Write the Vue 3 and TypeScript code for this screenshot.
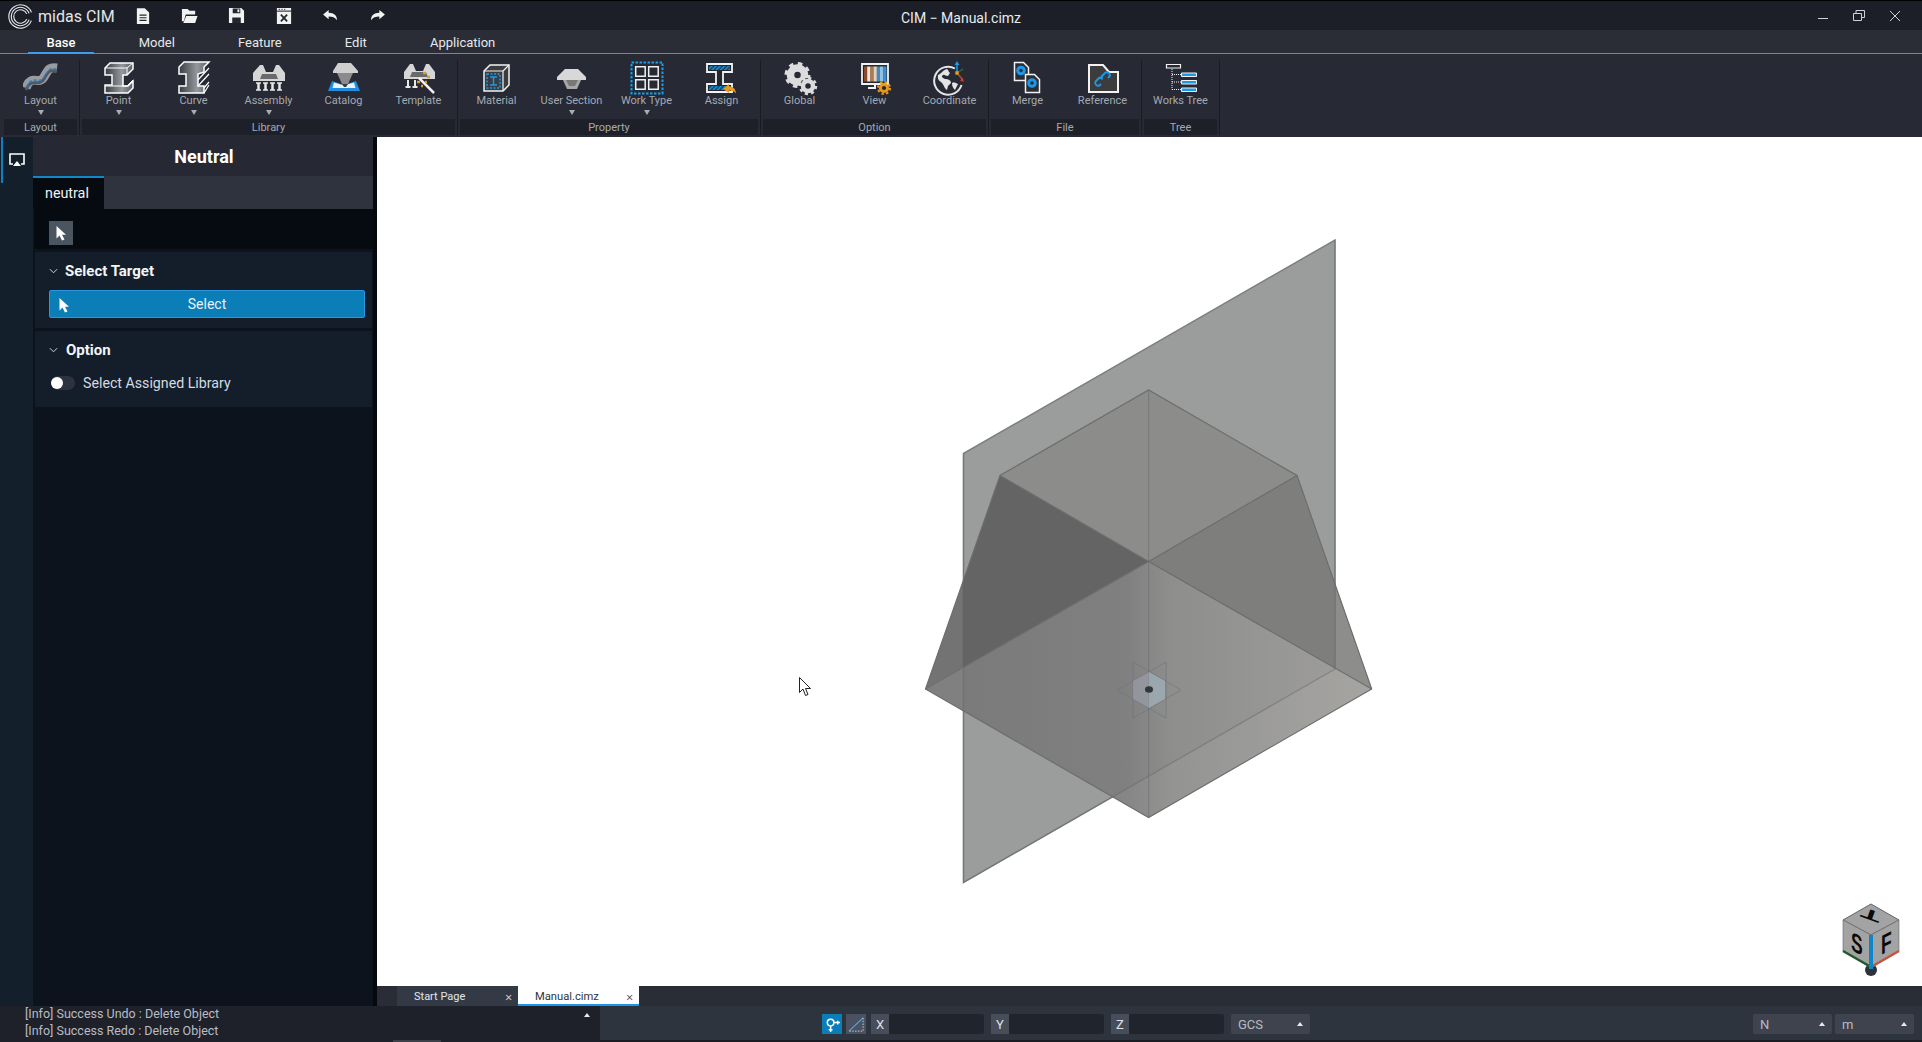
<script setup lang="ts">
interface RibbonItem { id: string; label: string; menu?: boolean }
interface RibbonGroup { label: string; items: RibbonItem[] }

const menuTabs: string[] = ['Base', 'Model', 'Feature', 'Edit', 'Application']
const groups: RibbonGroup[] = [
  { label: 'Layout', items: [{ id: 'layout', label: 'Layout', menu: true }] },
  { label: 'Library', items: [
    { id: 'point', label: 'Point', menu: true },
    { id: 'curve', label: 'Curve', menu: true },
    { id: 'assembly', label: 'Assembly', menu: true },
    { id: 'catalog', label: 'Catalog' },
    { id: 'template', label: 'Template' },
  ] },
  { label: 'Property', items: [
    { id: 'material', label: 'Material' },
    { id: 'section', label: 'User Section', menu: true },
    { id: 'worktype', label: 'Work Type', menu: true },
    { id: 'assign', label: 'Assign' },
  ] },
  { label: 'Option', items: [
    { id: 'global', label: 'Global' },
    { id: 'view', label: 'View' },
    { id: 'coordinate', label: 'Coordinate' },
  ] },
  { label: 'File', items: [
    { id: 'merge', label: 'Merge' },
    { id: 'reference', label: 'Reference' },
  ] },
  { label: 'Tree', items: [{ id: 'tree', label: 'Works Tree' }] },
]
const stripes: string[] = ['#8a4b2c', '#f1e7d6', '#b57a4a', '#d9d4c8', '#4f86b5', '#8fc0e6', '#3d8fd0']
const coords: string[] = ['X', 'Y', 'Z']
</script>

<template>
  <div class="app">
    <header class="titlebar">
      <div class="brand">
        <svg class="logo" viewBox="0 0 24 24" width="25" height="25" fill="none" stroke="#e6e8ec" stroke-width="1.100">
          <path d="M22.460 8A11.200 11.200 0 1 0 22.460 16" />
          <path d="M20.270 9A8.800 8.800 0 1 0 20.270 15" />
          <path d="M18 9.500A6.500 6.500 0 1 0 18 14.500" />
        </svg>
        <span class="brand-name">midas CIM</span>
      </div>
      <div class="quick">
        <span class="quick-btn">
          <svg viewBox="0 0 16 20" width="14" height="18"><path d="M1 1h9l5 5v13H1z" fill="#f2f2f2" /><path d="M4 9h8M4 12h8M4 15h8" stroke="#23262e" stroke-width="1.200" /></svg>
        </span>
        <span class="quick-btn">
          <svg viewBox="0 0 18 18" width="17" height="17"><path d="M1 2h6l2 2h6v4H5L3 15H1zM5.500 9.500H17.500L15 17H2.500z" fill="#f2f2f2" /></svg>
        </span>
        <span class="quick-btn">
          <svg viewBox="0 0 18 18" width="17" height="17"><path d="M1 1h13l3 3v13H1z" fill="#f2f2f2" /><path d="M5 1.500h8v5H5zM4.500 11h9v6h-9z" fill="#23262e" /><path d="M10 2.500h2v3h-2z" fill="#f2f2f2" /></svg>
        </span>
        <span class="quick-btn">
          <svg viewBox="0 0 18 20" width="16" height="18"><path d="M1 1h16v18H1z" fill="#f2f2f2" /><path d="M1 4.500h16" stroke="#23262e" stroke-width="1.200" /><path d="M3 2.500h1.500M6 2.500h1.500M9 2.500h1.500" stroke="#23262e" stroke-width="1" /><path d="M5.500 8.500l7 7.500M12.500 8.500l-7 7.500" stroke="#23262e" stroke-width="2" /></svg>
        </span>
        <span class="quick-btn">
          <svg viewBox="0 0 18 14" width="17" height="13"><path d="M7 1L1 6l6 5V8c4 0 7 1 9 4 0-5-3-8-9-8z" fill="#f2f2f2" /></svg>
        </span>
        <span class="quick-btn">
          <svg viewBox="0 0 18 14" width="17" height="13"><path d="M11 1l6 5-6 5V8c-4 0-7 1-9 4 0-5 3-8 9-8z" fill="#f2f2f2" /></svg>
        </span>
      </div>
      <div class="doc-title">CIM − Manual.cimz</div>
      <div class="window-btns">
        <svg viewBox="0 0 12 12" width="12" height="12"><path d="M1 8.500h10" stroke="#cfd3d8" stroke-width="1" /></svg>
        <svg viewBox="0 0 12 12" width="12" height="12" fill="none" stroke="#cfd3d8" stroke-width="1"><path d="M.5 3.500h8v7h-8zM3 3.500V.5h8.500v7H8.500" /></svg>
        <svg viewBox="0 0 12 12" width="12" height="12"><path d="M1 1l10 10M11 1L1 11" stroke="#cfd3d8" stroke-width="1" /></svg>
      </div>
    </header>

    <nav class="menu">
      <span v-for="(t, i) in menuTabs" :key="t" class="menu-tab" :class="{ active: i === 0 }">{{ t }}</span>
    </nav>

    <section class="ribbon">
      <div v-for="g in groups" :key="g.label" class="group">
        <div class="group-items">
          <div v-for="it in g.items" :key="it.id" class="item">
            <svg class="icon" viewBox="0 0 36 36" width="36" height="36">
              <defs v-if="it.id === 'point' || it.id === 'curve'">
                <linearGradient :id="`steel-${it.id}`" x1="0" y1="0" x2="1" y2="0">
                  <stop offset="0" stop-color="#3a3c41" />
                  <stop offset=".6" stop-color="#95989c" />
                  <stop offset="1" stop-color="#5a5d62" />
                </linearGradient>
              </defs>
              <template v-if="it.id === 'layout'">
                <path d="M3 28C8 13 16 26 21 17S27 7 34 8" fill="none" stroke="#989ba0" stroke-width="9" />
                <path d="M3 30C8 16 16 28 21 19S27 10 34 11" fill="none" stroke="#55585e" stroke-width="3" />
                <path d="M4 27C9 14 16 25 21 17S27 8 33 9" fill="none" stroke="#1f7fd0" stroke-width="1.500" stroke-dasharray="3 2" />
              </template>
              <template v-else-if="it.id === 'point'">
                <path d="M4 8l5-5h23v6l-6 6h-4v11h5l5-5v7l-5 5H4v-8h7V15H4z" fill="url(#steel-point)" stroke="#fff" stroke-width="1.500" />
                <path d="M4 8h22l6-5M26 8v7M4 26h22l6-6" fill="none" stroke="#fff" stroke-width="1" />
              </template>
              <template v-else-if="it.id === 'curve'">
                <path d="M3 7l5-5h25L28 7v5l-6 2v12h6v7H3v-7h7V14H3z" fill="url(#steel-curve)" stroke="#fff" stroke-width="1.500" />
                <path d="M22 26L33 14M22 20L33 8M28 33l5-8M28 28l5-6" stroke="#fff" stroke-width="1.200" />
              </template>
              <template v-else-if="it.id === 'assembly'">
                <path d="M2 21v-8l7-8h3l3 7h7l3-7h3l6 8v8z" fill="#d6d6d6" />
                <path d="M11 14h14l2 5H9z" fill="#6a6a6a" />
                <path d="M5 23h5M12 23h5M19 23h5M26 23h5M5 30h5M12 30h5M19 30h5M26 30h5" stroke="#e8e8e8" stroke-width="1.500" />
                <path d="M7.500 23v7M14.500 23v7M21.500 23v7M28.500 23v7" stroke="#e8e8e8" stroke-width="2.500" />
              </template>
              <template v-else-if="it.id === 'catalog'">
                <path d="M2 31l4-10 9 3h6l9-3 4 10z" fill="#1e8fe0" />
                <path d="M6.500 28L8 22.500l10 3 10-3 1.500 5.500z" fill="#eef3f7" />
                <path d="M12 3h13l7 8v2H7v-2z" fill="#cfcfcf" />
                <path d="M11 13h16l-5 11h-6z" fill="#8b8b8b" />
                <path d="M16 24h6l-2 3h-2z" fill="#3a3a3a" />
              </template>
              <template v-else-if="it.id === 'template'">
                <path d="M3 19v-7l6-8h3l3 7h7l3-7h3l6 8v7z" fill="#d6d6d6" />
                <path d="M11 12h14l2 5H9z" fill="#6a6a6a" />
                <path d="M7 20v7M4.500 27h5M14 20v7M11.500 27h5" stroke="#e8e8e8" stroke-width="2" />
                <path d="M18 18l15 15" stroke="#f0f0f0" stroke-width="2.500" />
                <path d="M16 22h3M22 13h3M26 17h3M20 26h2M24 22h2" stroke="#e79a1c" stroke-width="2.500" />
              </template>
              <template v-else-if="it.id === 'material'">
                <path d="M5 11l6-6h19v20l-6 6H5z" fill="#3a3c40" stroke="#f2f2f2" stroke-width="1.500" />
                <path d="M5 11h19v20M24 11l6-6" fill="none" stroke="#f2f2f2" stroke-width="1.200" />
                <path d="M8 14h13v14H8z" fill="none" stroke="#1c98e8" stroke-width="1.500" stroke-dasharray="2 1.500" />
                <path d="M11 17h7M11 25h7M14.500 17v8" stroke="#1c98e8" stroke-width="1.500" />
              </template>
              <template v-else-if="it.id === 'section'">
                <path d="M11 9h13l8 8v3H3v-3z" fill="#d8d8d8" />
                <path d="M9 20h18l-4 9H13z" fill="#a8a8a8" />
                <path d="M12 20h12l-3 6h-6z" fill="#787878" />
              </template>
              <template v-else-if="it.id === 'worktype'">
                <path d="M2.500 2.500h31v31h-31z" fill="none" stroke="#12a0ee" stroke-width="2" stroke-dasharray="2.500 1.500" />
                <path d="M6.700 6.700h9.500v9.500H6.700zM19.700 6.700h9.500v9.500h-9.500zM6.700 19.700h9.500v9.500H6.700zM19.700 19.700h9.500v9.500h-9.500z" fill="none" stroke="#f0f0f0" stroke-width="1.500" />
              </template>
              <template v-else-if="it.id === 'assign'">
                <defs>
                  <pattern id="hatch" width="3" height="3" patternUnits="userSpaceOnUse" patternTransform="rotate(45)">
                    <rect width="3" height="3" fill="#103a58" />
                    <rect width="1.500" height="3" fill="#1c98e8" />
                  </pattern>
                </defs>
                <path d="M3 4h25v8h-9v12h9v8H3v-8h9V12H3z" fill="#24272e" stroke="#f2f2f2" stroke-width="1.800" />
                <path d="M5 6h21v4H5zM5 26h21v4H5z" fill="url(#hatch)" />
                <path d="M25 24l-6 5 6 4v-2.500c3 0 5 .5 7 3-.5-5-3-7-7-7z" fill="#e79a1c" />
              </template>
              <template v-else-if="it.id === 'global'">
                <circle cx="15.500" cy="15" r="7" fill="none" stroke="#dcdcdc" stroke-width="7.500" />
                <circle cx="15.500" cy="15" r="11.500" fill="none" stroke="#dcdcdc" stroke-width="3" stroke-dasharray="4.500 4.530" />
                <circle cx="26" cy="26" r="8" fill="#272a34" />
                <circle cx="26" cy="26" r="5" fill="none" stroke="#dcdcdc" stroke-width="4.500" />
                <circle cx="26" cy="26" r="8" fill="none" stroke="#dcdcdc" stroke-width="2.500" stroke-dasharray="3.100 3.180" />
              </template>
              <template v-else-if="it.id === 'view'">
                <path d="M5 4h26v20H5z" fill="#24272e" stroke="#f2f2f2" stroke-width="1.800" />
                <rect v-for="(c, i) in stripes" :key="c" :x="7 + i * 3.200" y="6.500" width="3.300" height="15" :fill="c" />
                <path d="M18 24v4h-7" fill="none" stroke="#f2f2f2" stroke-width="2" />
                <circle cx="27" cy="28" r="3.600" fill="none" stroke="#e79a1c" stroke-width="3" />
                <circle cx="27" cy="28" r="6" fill="none" stroke="#e79a1c" stroke-width="2" stroke-dasharray="2.400 2.300" />
              </template>
              <template v-else-if="it.id === 'coordinate'">
                <path d="M23 8.500A14 14 0 1 0 29.500 25" fill="none" stroke="#e4e4e4" stroke-width="2" />
                <path d="M6 15c3-1 5-5 9-6 2 1 1 3 3 4l-2 3c-3 0-3-2-5-1s-1 3 2 4c3 0 6 1 6 4l-3 3-1 4c-3-2-3-5-5-7s-5-3-4-8zM20 23c2-1 4 0 6 1l-3 6c-2-2-3-4-3-7z" fill="#e4e4e4" />
                <path d="M25 13V3" stroke="#1c98e8" stroke-width="1.500" />
                <path d="M25 1l-2.500 4h5z" fill="#1c98e8" />
                <path d="M25 13l6 7" stroke="#c9452f" stroke-width="1.300" />
                <path d="M32 22l-4-1.500 2.500-2.500z" fill="#c9452f" />
                <path d="M25 13l6-4" stroke="#2f6d2e" stroke-width="1.500" />
                <rect x="23.300" y="11.300" width="3.400" height="3.400" fill="#e79a1c" />
              </template>
              <template v-else-if="it.id === 'merge'">
                <path d="M4.500 2.500h9l5 5v13h-14z" fill="#2a2d34" stroke="#f2f2f2" stroke-width="1.500" />
                <circle cx="11" cy="10.500" r="3.300" fill="none" stroke="#1c98e8" stroke-width="3" />
                <path d="M15.500 14.500h9l5 5v13h-14z" fill="#2a2d34" stroke="#f2f2f2" stroke-width="1.500" />
                <circle cx="22" cy="23" r="3.300" fill="none" stroke="#1c98e8" stroke-width="3" />
              </template>
              <template v-else-if="it.id === 'reference'">
                <path d="M4 5h14l6 7h9v20H4z" fill="#3c3c3c" stroke="#f2f2f2" stroke-width="2" />
                <path d="M15 24l-1.500 1.500a3 3 0 0 1-4-4l3-3a3 3 0 0 1 4 0M22 18l1.500-1.500a3 3 0 0 0-4-4l-3 3a3 3 0 0 0 0 4" transform="translate(1 0)" fill="none" stroke="#1c98e8" stroke-width="2" />
              </template>
              <template v-else-if="it.id === 'tree'">
                <path d="M3.500 4.500h14v3.500h-14z" fill="none" stroke="#f2f2f2" stroke-width="1.200" />
                <path d="M9 9v20.500M9 14.500h9M9 22h9M9 29.500h9" stroke="#f2f2f2" stroke-width="1" stroke-dasharray="1 1" fill="none" />
                <path d="M18.500 13h15v3.500h-15zM18.500 20.500h15v3.500h-15zM18.500 28h15v3.500h-15z" fill="#1c98e8" stroke="#f2f2f2" stroke-width="1" />
              </template>
            </svg>
            <span class="item-label">{{ it.label }}</span>
            <span v-if="it.menu" class="item-arrow"></span>
          </div>
        </div>
        <div class="group-label">{{ g.label }}</div>
      </div>
    </section>

    <main class="main">
      <aside class="sidebar">
        <div class="rail">
          <div class="rail-item">
            <svg viewBox="0 0 16 14" width="16" height="14" fill="none">
              <path d="M4 11H1V1h14v10h-3" stroke="#fff" stroke-width="1.600" />
              <path d="M8 8l4 5H4z" fill="#fff" />
            </svg>
          </div>
        </div>
        <div class="panel">
          <h1 class="panel-title">Neutral</h1>
          <div class="panel-tabs"><span class="panel-tab">neutral</span></div>
          <div class="panel-tools">
            <span class="tool-btn">
              <svg viewBox="0 0 12 16" width="12" height="16"><path d="M1.500 1v12.500l3-3L7 15.500l2.500-1L7 9.800h4z" fill="#fff" /></svg>
            </span>
          </div>
          <section class="card">
            <div class="card-head">
              <svg viewBox="0 0 10 6" width="9" height="6" fill="none"><path d="M1 1l4 4 4-4" stroke="#cfd5dc" stroke-width="1.100" /></svg>
              <span>Select Target</span>
            </div>
            <button class="select-btn">
              <svg class="select-cursor" viewBox="0 0 12 16" width="12" height="16"><path d="M1.500 1v12.500l3-3L7 15.500l2.500-1L7 9.800h4z" fill="#fff" /></svg>
              Select
            </button>
          </section>
          <section class="card">
            <div class="card-head">
              <svg viewBox="0 0 10 6" width="9" height="6" fill="none"><path d="M1 1l4 4 4-4" stroke="#cfd5dc" stroke-width="1.100" /></svg>
              <span>Option</span>
            </div>
            <label class="toggle-row">
              <span class="toggle"><span class="knob"></span></span>
              <span>Select Assigned Library</span>
            </label>
          </section>
        </div>
      </aside>

      <div class="work">
        <div class="viewport">
          <svg class="scene" viewBox="377 137 1545 849">
            <defs>
              <linearGradient id="floor" x1="925" y1="0" x2="1372" y2="0" gradientUnits="userSpaceOnUse">
                <stop offset="0" stop-color="#777777" />
                <stop offset=".45" stop-color="#7e7e7e" />
                <stop offset=".55" stop-color="#8d8d8c" />
                <stop offset="1" stop-color="#a09f9c" />
              </linearGradient>
            </defs>
            <polygon points="963.500,453.500 1335,240 1335,669 963.500,882.500" fill="#9b9d9c" stroke="#7c807e" stroke-width="1.500" />
            <polygon points="1000,475.500 1148.600,561.500 925.500,689" fill="#5b5b5a" fill-opacity=".85" />
            <polygon points="1297,475.500 1148.600,561.500 1371.700,689" fill="#797978" fill-opacity=".85" />
            <polygon points="1000,475.500 1148.600,390 1297,475.500 1148.600,561.500" fill="#868685" fill-opacity=".7" />
            <polygon points="925.500,689 1148.600,561.500 1371.700,689 1148.600,817.500" fill="url(#floor)" fill-opacity=".94" />
            <g fill="none" stroke="#6c6e6d" stroke-width="1.200">
              <path d="M925.500 689L1000 475.500L1148.600 390L1297 475.500L1371.700 689L1148.600 817.500Z" />
              <path d="M1000 475.500L1148.600 561.500L1297 475.500M925.500 689L1148.600 561.500L1371.700 689" />
              <path d="M1148.600 390V817.500" stroke-opacity=".55" />
              <path d="M963.500 453.500V882.500L1335 669V240" stroke-opacity=".5" />
            </g>
            <g fill="none" stroke="#6e7378" stroke-opacity=".6" stroke-width="1">
              <polygon points="1133,662 1181,690 1133,718" />
              <polygon points="1166,662 1117,690 1166,718" />
            </g>
            <polygon points="1149,672 1165,681 1165,699 1149,708" fill="#a9c0cc" fill-opacity=".55" />
            <polygon points="1149,672 1133,681 1133,699 1149,708" fill="#a0a4b4" fill-opacity=".55" />
            <ellipse cx="1149" cy="689.500" rx="4" ry="3.200" fill="#33373d" />

            <path d="M799.500 677.500V692.500L803 689L805.500 695.500L808 694.500L805.500 688.500H810.500Z" fill="#fff" stroke="#222" stroke-width="1" />

            <circle cx="1871" cy="970" r="6" fill="#2e323a" />
            <polygon points="1871,904 1899,920 1871,935 1843,920" fill="#a3a3a3" stroke="#62646a" stroke-width="1" />
            <polygon points="1843,920 1871,935 1871,968 1843,951" fill="#a3a3a3" stroke="#62646a" stroke-width=".6" />
            <polygon points="1899,920 1871,935 1871,968 1899,951" fill="#a3a3a3" stroke="#62646a" stroke-width=".6" />
            <path d="M1843 951L1871 967" stroke="#24582f" stroke-width="2.500" />
            <path d="M1899 951L1871 967" stroke="#c2573f" stroke-width="2.500" />
            <path d="M1871 935V969" stroke="#0f86c6" stroke-width="4" />
            <text class="cube-text" font-size="27" transform="matrix(.65 .33 0 1 1851 950)">S</text>
            <text class="cube-text" font-size="27" transform="matrix(.65 -.33 0 1 1881 955)">F</text>
            <text class="cube-text cube-top" font-size="21" x="0" y="15" transform="translate(1869 920) rotate(200) scale(1.600 .7)">T</text>
          </svg>
        </div>
        <div class="doc-tabs">
          <div class="doc-tab">
            <span>Start Page</span><span class="doc-close">×</span>
          </div>
          <div class="doc-tab current">
            <span>Manual.cimz</span><span class="doc-close">×</span>
          </div>
        </div>
      </div>
    </main>

    <footer class="status">
      <div class="log">
        <div class="log-lines">
          <div>[Info] Success Undo : Delete Object</div>
          <div>[Info] Success Redo : Delete Object</div>
        </div>
        <span class="mini-up"></span>
      </div>
      <div class="statusbar">
        <div class="snap">
          <span class="snap-btn on">
            <svg viewBox="0 0 18 18" width="17" height="17" fill="none" stroke="#fff" stroke-width="1.600">
              <circle cx="7" cy="7" r="3.500" />
              <path d="M7 10.500V17M5 14.500h4M10.500 7H17M14.500 5v4" />
            </svg>
          </span>
          <span class="snap-btn">
            <svg viewBox="0 0 18 18" width="17" height="17" fill="none">
              <path d="M1 16L16 2" stroke="#5aa6e0" stroke-width="1.200" />
              <path d="M16 2v14H1" stroke="#d5d8dc" stroke-width="1" stroke-dasharray="1.500 1.500" />
            </svg>
          </span>
        </div>
        <div class="coords">
          <div v-for="c in coords" :key="c" class="coord">
            <span class="coord-key">{{ c }}</span>
            <span class="coord-input"></span>
          </div>
        </div>
        <div class="combo gcs"><span>GCS</span><span class="mini-up"></span></div>
        <div class="units">
          <div class="combo"><span>N</span><span class="mini-up"></span></div>
          <div class="combo"><span>m</span><span class="mini-up"></span></div>
        </div>
      </div>
    </footer>
  </div>
</template>

<style scoped>
.app {
  display: flex;
  flex-direction: column;
  height: 100vh;
  width: 100%;
  font-family: Roboto, "Liberation Sans", sans-serif;
  color: #d8dce2;
  background: #0c131d;
  overflow: hidden;
}
.titlebar {
  position: relative;
  display: flex;
  align-items: center;
  height: 30px;
  flex: none;
  background: #1c1f27;
  border-top: 1px solid #000;
  box-sizing: border-box;
}
.brand {
  display: flex;
  align-items: center;
  gap: 5px;
  width: 119px;
  padding: 1px 0 0 8px;
  box-sizing: border-box;
}
.brand-name {
  font-size: 16px;
  color: #e4e6ea;
  white-space: nowrap;
}
.quick {
  display: flex;
  align-items: center;
}
.quick-btn {
  display: flex;
  align-items: center;
  justify-content: center;
  width: 47px;
  height: 24px;
}
.doc-title {
  position: absolute;
  left: 0;
  right: 0;
  top: 8px;
  text-align: center;
  font-size: 14px;
  line-height: 18px;
  color: #e8ebef;
}
.window-btns {
  margin-left: auto;
  display: flex;
  align-items: center;
  gap: 24px;
  padding-right: 21px;
  position: relative;
}
.menu {
  display: flex;
  align-items: stretch;
  height: 24px;
  flex: none;
  padding-left: 15px;
  background: #2a2d36;
  border-bottom: 1px solid #4a8fd8;
  box-sizing: border-box;
}
.menu-tab {
  position: relative;
  padding: 0 31.600px;
  font-size: 13px;
  line-height: 26px;
  color: #e6e8ec;
}
.menu-tab.active {
  color: #fff;
  font-weight: 500;
}
.menu-tab.active::after {
  content: "";
  position: absolute;
  left: 13px;
  right: 13px;
  bottom: -1px;
  height: 2px;
  background: #3b9cf0;
}
.ribbon {
  display: flex;
  height: 83px;
  flex: none;
  padding: 0 0 2px 3px;
  background: #272a34;
  box-sizing: border-box;
}
.group {
  position: relative;
  display: flex;
  flex-direction: column;
}
.group + .group {
  margin-left: 3px;
}
.group + .group::before,
.group:last-child::after {
  content: "";
  position: absolute;
  top: 6px;
  bottom: 0;
  width: 1px;
  background: #191b21;
}
.group + .group::before {
  left: -2px;
}
.group:last-child::after {
  right: -2px;
}
.group-items {
  display: flex;
  height: 65px;
}
.item {
  display: flex;
  flex-direction: column;
  align-items: center;
  width: 75px;
  padding-top: 6px;
  box-sizing: border-box;
}
.icon {
  flex: none;
  margin-bottom: -2px;
}
.item-label {
  font-size: 11px;
  line-height: 13px;
  color: #a3a9b2;
  white-space: nowrap;
}
.item-arrow {
  margin-top: 3px;
  width: 0;
  height: 0;
  border-left: 3px solid transparent;
  border-right: 3px solid transparent;
  border-top: 5px solid #a8adb5;
}
.group-label {
  height: 16px;
  margin: 0 1px;
  background: #1d2028;
  font-size: 11px;
  line-height: 18px;
  text-align: center;
  color: #a3a9b2;
}
.main {
  flex: 1;
  display: flex;
  min-height: 0;
}
.sidebar {
  display: flex;
  width: 377px;
  flex: none;
  box-sizing: border-box;
  border-right: 4px solid #05080c;
  background: #0c131d;
}
.rail {
  width: 33px;
  flex: none;
  background: #13202b;
}
.rail-item {
  display: flex;
  align-items: center;
  justify-content: center;
  height: 46px;
  border-left: 2px solid #0f7fc0;
  margin-left: 1px;
  box-sizing: border-box;
  padding-right: 3px;
}
.panel {
  flex: 1;
  display: flex;
  flex-direction: column;
  min-width: 0;
}
.panel-title {
  margin: 0;
  height: 39px;
  padding-left: 2px;
  background: #262933;
  font-size: 18px;
  font-weight: 700;
  line-height: 40px;
  text-align: center;
  color: #fff;
}
.panel-tabs {
  display: flex;
  height: 33px;
  background: #2e333d;
}
.panel-tab {
  width: 71px;
  background: #060b12;
  border-top: 2px solid #0f88c8;
  box-sizing: border-box;
  font-size: 14.300px;
  line-height: 30px;
  padding-left: 12px;
  color: #f0f2f5;
}
.panel-tools {
  height: 40px;
  margin: 0 0 3px 1px;
  padding: 12px 0 0 15px;
  box-sizing: border-box;
  background: #060b12;
}
.tool-btn {
  display: flex;
  align-items: center;
  justify-content: center;
  width: 24px;
  height: 24px;
  background: #4a5560;
}
.card {
  height: 76px;
  margin: 0 1px 3px 2px;
  background: #141e2a;
  padding: 0 7px 0 14px;
}
.card-head {
  display: flex;
  align-items: center;
  gap: 7px;
  height: 38px;
  font-size: 15px;
  font-weight: 700;
  color: #f2f4f7;
}
.card + .card .card-head {
  gap: 8px;
}
.select-btn {
  position: relative;
  display: block;
  width: 316px;
  height: 28px;
  padding: 0;
  background: #0b7eb8;
  border: 1px solid #2a96e0;
  border-radius: 2px;
  font-family: inherit;
  font-size: 14px;
  color: #e8f2f8;
  box-sizing: border-box;
}
.select-cursor {
  position: absolute;
  left: 8px;
  top: 6px;
}
.toggle-row {
  display: flex;
  align-items: center;
  gap: 8px;
  padding-left: 2px;
  height: 14px;
  margin-top: 7px;
  font-size: 14.200px;
  color: #d5dae0;
}
.toggle {
  position: relative;
  width: 24px;
  height: 14px;
  border-radius: 7px;
  background: #2c3240;
}
.knob {
  position: absolute;
  left: 0;
  top: 1px;
  width: 12px;
  height: 12px;
  border-radius: 50%;
  background: #fff;
}
.work {
  flex: 1;
  display: flex;
  flex-direction: column;
  min-width: 0;
}
.viewport {
  position: relative;
  flex: 1;
  background: #fff;
  min-height: 0;
}
.scene {
  position: absolute;
  inset: 0;
  width: 100%;
  height: 100%;
}
.cube-text {
  font-family: "Liberation Sans", sans-serif;
  font-weight: 700;
  fill: #0a0a0a;
}
.cube-top {
  text-anchor: middle;
}
.doc-tabs {
  display: flex;
  height: 20px;
  flex: none;
  padding-left: 20px;
  background: #2a2d36;
}
.doc-tab {
  display: flex;
  align-items: center;
  justify-content: space-between;
  width: 121px;
  padding: 1px 6px 0 17px;
  box-sizing: border-box;
  background: #333a45;
  font-size: 11px;
  color: #e4e7ea;
}
.doc-tab.current {
  background: #fff;
  color: #30343a;
  box-shadow: inset 0 -2px 0 #1f95e8;
  padding-left: 17px;
  font-size: 11.200px;
}
.doc-close {
  font-size: 13px;
  font-weight: 300;
  line-height: 14px;
}
.status {
  display: flex;
  height: 36px;
  flex: none;
  background: #2e343e;
}
.log {
  position: relative;
  display: flex;
  justify-content: space-between;
  width: 600px;
  flex: none;
  padding: 0 10px 0 25px;
  box-sizing: border-box;
  background: #1e2129;
  font-size: 12.500px;
  line-height: 17px;
  color: #b8bcc4;
}
.log::after {
  content: "";
  position: absolute;
  left: 393px;
  bottom: 0;
  width: 48px;
  height: 2px;
  background: #3c4048;
}
.log-lines {
  margin-top: -1px;
  white-space: nowrap;
}
.log .mini-up {
  margin-top: 7px;
}
.mini-up {
  display: inline-block;
  width: 0;
  height: 0;
  border-left: 3px solid transparent;
  border-right: 3px solid transparent;
  border-bottom: 4px solid #e8eaee;
}
.statusbar {
  flex: 1;
  display: flex;
  align-items: flex-start;
  padding: 8px 8px 0 222px;
  border-bottom: 2px solid #1a1d24;
  box-sizing: border-box;
}
.snap {
  display: flex;
  gap: 4px;
  margin-right: 5px;
}
.snap-btn {
  display: flex;
  align-items: center;
  justify-content: center;
  width: 20px;
  height: 20px;
  background: #4a5160;
}
.snap-btn.on {
  background: #0b7eb8;
}
.coords {
  display: flex;
  gap: 7px;
}
.coord {
  display: flex;
  width: 113px;
  height: 20px;
}
.coord-key {
  width: 18px;
  background: #474d59;
  text-align: center;
  font-size: 13px;
  line-height: 21px;
  color: #dfe2e6;
}
.coord-input {
  flex: 1;
  background: #20242c;
  border-radius: 0 2px 2px 0;
}
.combo {
  display: flex;
  align-items: center;
  justify-content: space-between;
  width: 79px;
  height: 20px;
  padding: 0 7px;
  box-sizing: border-box;
  background: #3e434e;
  border-radius: 2px;
  font-size: 13px;
  color: #b4bcc6;
}
.gcs {
  margin-left: 7px;
}
.units {
  display: flex;
  gap: 3px;
  margin-left: auto;
}
</style>

<style>
html, body {
  margin: 0;
  height: 100%;
  overflow: hidden;
  background: #0c131d;
}
</style>
